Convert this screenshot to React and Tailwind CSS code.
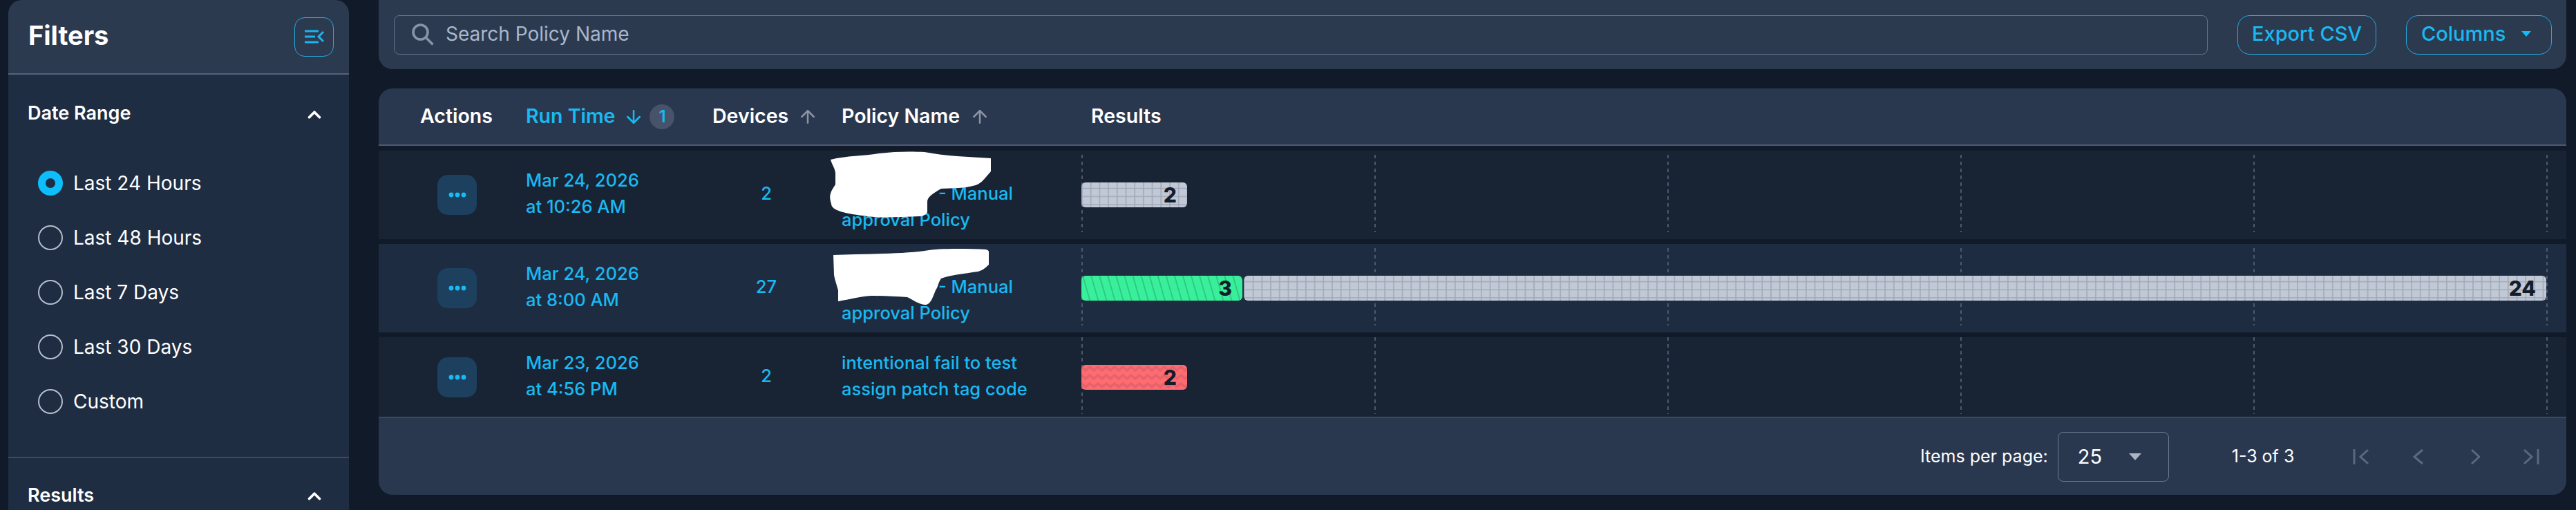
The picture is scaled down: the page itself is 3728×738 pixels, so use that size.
import React from "react";
import { ArrowDown, ArrowUp, ChevronUp } from "lucide-react";

const ranges = ["Last 24 Hours", "Last 48 Hours", "Last 7 Days", "Last 30 Days", "Custom"];

const patterns = {
  grid: (
    <pattern id="grid" width="12.7" height="11.7" patternUnits="userSpaceOnUse">
      <rect width="12.7" height="11.7" fill="#c2c9d6" />
      <path d="M1 0V11.7M0 8.5H12.7" stroke="#a1a8b8" strokeWidth="1.6" fill="none" />
    </pattern>
  ),
  stripe: (
    <pattern id="stripe" width="11.6" height="36" patternUnits="userSpaceOnUse" patternTransform="rotate(-16)">
      <rect width="11.6" height="36" fill="#39f09a" />
      <path d="M2 0V36" stroke="#2fc488" strokeWidth="1.8" />
    </pattern>
  ),
  zigzag: (
    <pattern id="zigzag" width="12" height="12" patternUnits="userSpaceOnUse">
      <rect width="12" height="12" fill="#ff6b70" />
      <path d="M-6 8L0 3L6 8L12 3L18 8" stroke="#e3646c" strokeWidth="3.6" fill="none" />
    </pattern>
  ),
};

const Bar = ({ kind, count, width }) => (
  <div className="relative h-[36px] rounded-[6px] overflow-hidden flex items-center justify-end pr-[15px]" style={{ width }}>
    <svg className="absolute inset-0 w-full h-full">
      <defs>{patterns[kind]}</defs>
      <rect width="100%" height="100%" fill={`url(#${kind})`} />
    </svg>
    <span className="relative text-[30px] font-extrabold text-[#131c2b]">{count}</span>
  </div>
);

const Radio = ({ label, checked }) => (
  <label className="flex items-center h-[36px] gap-[15px] text-[28px] text-white">
    {checked ? (
      <span className="w-[36px] h-[36px] rounded-full border-[11px] border-[#0ebdfc]" />
    ) : (
      <span className="w-[36px] h-[36px] rounded-full border-2 border-[#b5bdca]" />
    )}
    {label}
  </label>
);

const Sidebar = () => (
  <aside className="w-[493px] shrink-0 h-full bg-[#1f2d42] rounded-t-[20px]">
    <div className="h-[108px] bg-[#2c3a50] border-b-2 border-[#56627a] rounded-t-[20px] flex items-center justify-between pl-[29px] pr-[22px]">
      <h2 className="text-[38px] font-bold text-white pb-[3px]">Filters</h2>
      <button className="w-[57px] h-[57px] rounded-[15px] border border-[#26a9dc] flex items-center justify-center">
        <svg width="28" height="20" viewBox="0 0 28 20" fill="none" stroke="#19b5ee" strokeWidth="3">
          <path d="M0 2H20M0 10H15M0 18H20M27 3L20 10L27 17" />
        </svg>
      </button>
    </div>
    <div className="h-[555px] border-b-2 border-[#3f4b60]">
      <div className="flex items-center justify-between h-[115px] pl-[28px] pr-[35px]">
        <span className="text-[27px] font-semibold text-white pb-[2px]">Date Range</span>
        <ChevronUp size={30} strokeWidth={3} color="#fff" />
      </div>
      <div className="flex flex-col gap-[43px] pl-[43px] pt-[24px]">
        {ranges.map((r, i) => (
          <Radio key={r} label={r} checked={i === 0} />
        ))}
      </div>
    </div>
    <div className="flex items-center justify-between h-[112px] pl-[28px] pr-[35px]">
      <span className="text-[27px] font-semibold text-white pb-[4px]">Results</span>
      <ChevronUp size={30} strokeWidth={3} color="#fff" className="mb-[2px]" />
    </div>
  </aside>
);

const Toolbar = () => (
  <div className="h-[100px] shrink-0 bg-[#2c3a50] rounded-b-[20px] flex items-center pl-[22px] pr-[21px]">
    <div className="h-[57px] flex-1 rounded-[8px] border border-[#64718a] flex items-center pl-[25px] gap-[17px]">
      <svg width="32" height="32" viewBox="0 0 32 32" fill="none" stroke="#8793a7" strokeWidth="3.6">
        <circle cx="12.5" cy="12.5" r="10.5" />
        <path d="M20 20L30.5 30.5" />
      </svg>
      <span className="text-[28px] text-[#a9b6cc] pb-[2px]">Search Policy Name</span>
    </div>
    <button className="ml-[43px] w-[201px] h-[57px] rounded-[18px] border border-[#26a9dc] text-[29px] font-medium text-[#19b9f2] pb-[2px]">
      Export CSV
    </button>
    <button className="ml-[43px] w-[211px] h-[57px] rounded-[18px] border border-[#26a9dc] flex items-center pl-[21px] text-[29px] font-medium text-[#19b9f2] pb-[2px]">
      Columns
      <span className="ml-[23px] w-0 h-0 border-x-[7px] border-x-transparent border-t-[8px] border-t-[#0ebdfc]" />
    </button>
  </div>
);

const gridCols = "grid grid-cols-[213px_270px_187px_347px_1fr]";

const Header = () => (
  <div className={`${gridCols} h-[83px] shrink-0 bg-[#2a384f] border-b-2 border-[#4e5a70] items-center text-[28.5px] font-semibold text-white`}>
    <div className="pl-[60px]">Actions</div>
    <div className="flex items-center text-[#19b9f2]">
      Run Time
      <ArrowDown size={30} strokeWidth={2} className="ml-[12px]" />
      <span className="ml-[8px] w-[36px] h-[36px] rounded-full bg-[#46536a] flex items-center justify-center text-[24px]">1</span>
    </div>
    <div className="flex items-center">
      Devices
      <ArrowUp size={30} strokeWidth={2} color="#8a93a3" className="ml-[13px]" />
    </div>
    <div className="flex items-center">
      Policy Name
      <ArrowUp size={30} strokeWidth={2} color="#8a93a3" className="ml-[14px]" />
    </div>
    <div className="pl-[14px]">Results</div>
  </div>
);

const Row = ({ date, time, devices, lines, bars, bg, dashes, h }) => (
  <div className={`${gridCols} ${bg} ${h} shrink-0 items-center text-[25.5px] font-medium leading-[38px] text-[#19b9f2]`}>
    <div className="pl-[85px]">
      <button className="w-[57px] h-[58px] rounded-[15px] bg-[#1c405e] flex items-center justify-center">
        <svg width="26" height="8" viewBox="0 0 26 8" fill="#19b9f2">
          <circle cx="4" cy="4" r="3.4" />
          <circle cx="13" cy="4" r="3.4" />
          <circle cx="22" cy="4" r="3.4" />
        </svg>
      </button>
    </div>
    <div className="pb-[4px]">
      {date}
      <br />
      {time}
    </div>
    <div className="w-[156px] text-center pb-[4px]">{devices}</div>
    <div className="pb-[4px]">{lines}</div>
    <div className="relative h-full pr-[29px] flex items-center">
      <div className={`absolute left-0 right-[27px] ${dashes} flex justify-between`}>
        {[0, 1, 2, 3, 4, 5].map((i) => (
          <span key={i} className="w-[2px] h-full bg-[repeating-linear-gradient(to_bottom,#4d586c_0_5px,transparent_5px_10px)]" />
        ))}
      </div>
      <div className="relative flex gap-[2px]">
        {bars.map((b) => (
          <Bar key={b.kind} {...b} />
        ))}
      </div>
    </div>
  </div>
);

const ManualLines = () => (
  <>
    <div className="h-[38px]" />
    <div className="pl-[140px]">- Manual</div>
    <div>approval Policy</div>
  </>
);

const Footer = () => (
  <div className="flex-1 bg-[#2a384f] border-t-2 border-[#3b4a63] flex items-center text-[25px] text-white">
    <span className="ml-[2231px]">Items per page:</span>
    <div className="ml-[14px] w-[161px] h-[72px] rounded-[8px] border border-[#6b7a94] flex items-center pl-[28px] text-[29px]">
      25
      <span className="ml-[39px] w-0 h-0 border-x-[9px] border-x-transparent border-t-[10px] border-t-[#aab4c5]" />
    </div>
    <span className="ml-[91px]">1-3 of 3</span>
    <div className="ml-[85px] flex items-center">
      <svg width="24" height="24" viewBox="0 0 24 24" fill="none" stroke="#5a6880" strokeWidth="3">
        <path d="M2 1V23M22 2L11 12L22 22" />
      </svg>
      <svg className="ml-[63px]" width="15" height="24" viewBox="0 0 15 24" fill="none" stroke="#5a6880" strokeWidth="3">
        <path d="M14 2L2 12L14 22" />
      </svg>
      <svg className="ml-[69px]" width="13" height="24" viewBox="0 0 13 24" fill="none" stroke="#5a6880" strokeWidth="3">
        <path d="M1 2L12 12L1 22" />
      </svg>
      <svg className="ml-[62px]" width="24" height="24" viewBox="0 0 24 24" fill="none" stroke="#5a6880" strokeWidth="3">
        <path d="M22 1V23M2 2L13 12L2 22" />
      </svg>
    </div>
  </div>
);

// white scribbles sitting over the hidden part of the policy names
const Scribbles = () => (
  <svg className="absolute left-0 top-0 w-[3728px] h-[738px] pointer-events-none" fill="#fff">
    <path d="M1202 231C1225 225 1250 226 1272 222C1295 219 1320 219 1338 220C1370 226 1400 227 1434 229V248C1425 258 1421 265 1412 268C1395 273 1380 272 1362 273C1350 280 1342 285 1342 292V307C1340 311 1335 313 1330 313C1300 314 1270 316 1248 312C1225 309 1203 305 1203 295C1200 285 1200 280 1209 267V250C1208 243 1204 238 1202 231Z" />
    <path d="M1206 369C1250 367 1300 368 1338 363C1360 359 1400 360 1427 361C1431 362 1431 364 1431 365V383C1425 389 1420 392 1415 393C1395 396 1375 398 1362 403C1357 410 1358 415 1354 420C1350 430 1347 440 1340 441C1330 441 1320 433 1313 430C1295 429 1275 428 1260 428C1245 429 1230 433 1213 436V420C1210 410 1207 400 1207 397Z" />
  </svg>
);

const App = () => (
  <div className="relative w-[3728px] h-[738px] overflow-hidden bg-[#111a28] flex pl-[12px] pr-[14px] gap-[43px] font-['Inter',sans-serif]">
    <Sidebar />
    <main className="flex-1 flex flex-col gap-[28px] h-[716px]">
      <Toolbar />
      <div className="flex-1 rounded-[20px] overflow-hidden flex flex-col gap-[7px] bg-[#111a28]">
        <Header />
        <Row
          date="Mar 24, 2026"
          time="at 10:26 AM"
          devices="2"
          lines={<ManualLines />}
          bars={[{ kind: "grid", count: 2, width: 153 }]}
          bg="bg-[#182334]"
          h="h-[128px]"
          dashes="top-[6px] bottom-[10px]"
        />
        <Row
          date="Mar 24, 2026"
          time="at 8:00 AM"
          devices="27"
          lines={<ManualLines />}
          bars={[
            { kind: "stripe", count: 3, width: 233 },
            { kind: "grid", count: 24, width: 1885 },
          ]}
          bg="bg-[#1e2c42]"
          h="h-[128px]"
          dashes="top-[6px] bottom-[10px]"
        />
        <div className="flex-1 flex flex-col">
          <Row
            date="Mar 23, 2026"
            time="at 4:56 PM"
            devices="2"
            lines={
              <>
                <div>intentional fail to test</div>
                <div>assign patch tag code</div>
              </>
            }
            bars={[{ kind: "zigzag", count: 2, width: 153 }]}
            bg="bg-[#182334]"
            h="h-[115px]"
            dashes="top-0 bottom-[4px]"
          />
          <Footer />
        </div>
      </div>
    </main>
    <Scribbles />
  </div>
);

export default App;
